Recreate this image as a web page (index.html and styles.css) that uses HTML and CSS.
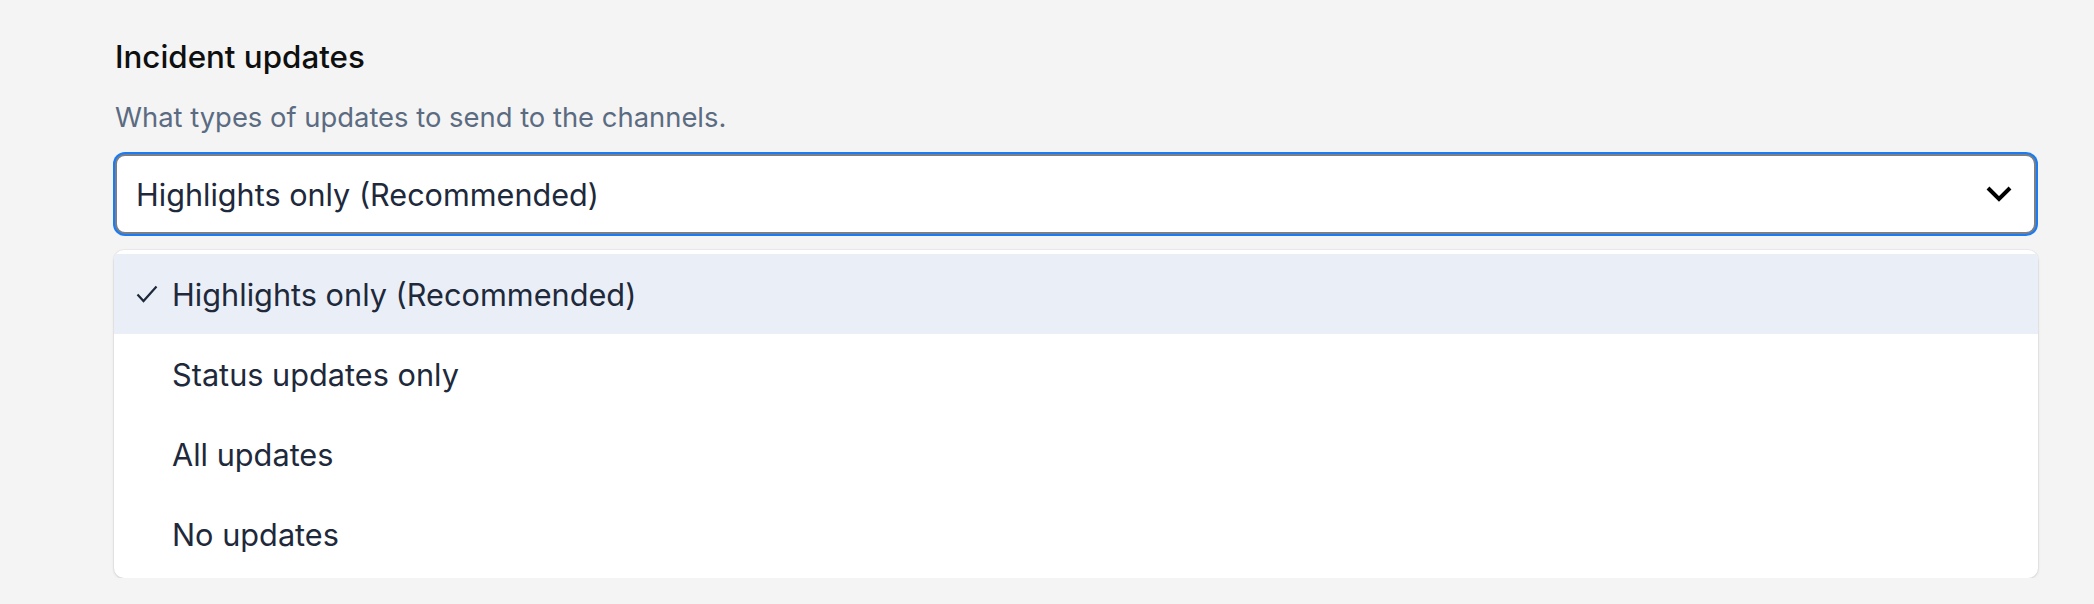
FILE: index.html
```html
<!DOCTYPE html>
<html lang="en">
<head>
    <meta charset="UTF-8">
    <meta name="viewport" content="width=device-width, initial-scale=1.0">
    <title>Incident updates</title>
    <link rel="stylesheet" href="styles.css">
</head>
<body>
    <div class="settings">
        <div class="field">
            <h2 class="field-title">Incident updates</h2>
            <p class="field-help">What types of updates to send to the channels.</p>

            <div class="select">
                <span class="select-value">Highlights only (Recommended)</span>
                <svg class="chevron" width="26" height="16" viewBox="0 0 26 16">
                    <path d="M2 2 L13 13 L24 2" fill="none" stroke="#000" stroke-width="4"/>
                </svg>
            </div>

            <ul class="options">
                <li class="option selected">
                    <span class="check">
                        <svg width="22" height="18" viewBox="0 0 22 18">
                            <path d="M1.5 9.5 L7.5 16 L20.5 1.5" fill="none" stroke="#1e293b" stroke-width="2.2"/>
                        </svg>
                    </span>
                    Highlights only (Recommended)
                </li>
                <li class="option"><span class="check"></span>Status updates only</li>
                <li class="option"><span class="check"></span>All updates</li>
                <li class="option"><span class="check"></span>No updates</li>
            </ul>
        </div>
    </div>
</body>
</html>
```

FILE: styles.css
```css
* {
    margin: 0;
    padding: 0;
    box-sizing: border-box;
}

body {
    font-family: 'Inter', 'Noto Sans', sans-serif;
    background: #f4f4f4;
    color: #1e293b;
}

.settings {
    padding: 37px 58px 0 115px;
}

.field-title {
    font-size: 31.3px;
    font-weight: 500;
    line-height: 40px;
    color: #0f0f10;
}

.field-help {
    margin-top: 22px;
    font-size: 27.4px;
    line-height: 36px;
    color: #5b6b81;
}

.select {
    margin-top: 19px;
    height: 80px;
    display: flex;
    align-items: center;
    justify-content: space-between;
    padding: 0 22px 0 19px;
    background: #fff;
    border: 2px solid #7b7f86;
    border-radius: 10px;
    box-shadow: 0 0 0 2px #1a7cf5;
}

.select-value {
    font-size: 30.6px;
    color: #1e293b;
}

.options {
    list-style: none;
    margin: 16px -2px 0 -1px;
    padding: 4px 0;
    background: #fff;
    border-radius: 10px;
    box-shadow: 0 1px 3px rgba(0, 0, 0, 0.12), 0 0 0 1px rgba(0, 0, 0, 0.03);
    overflow: hidden;
}

.option {
    height: 80px;
    display: flex;
    align-items: center;
    padding-left: 22px;
    font-size: 30.7px;
    color: #1e293b;
}

.option.selected {
    background: #eaeff7;
}

.check {
    width: 36px;
    display: flex;
    align-items: center;
}
```
